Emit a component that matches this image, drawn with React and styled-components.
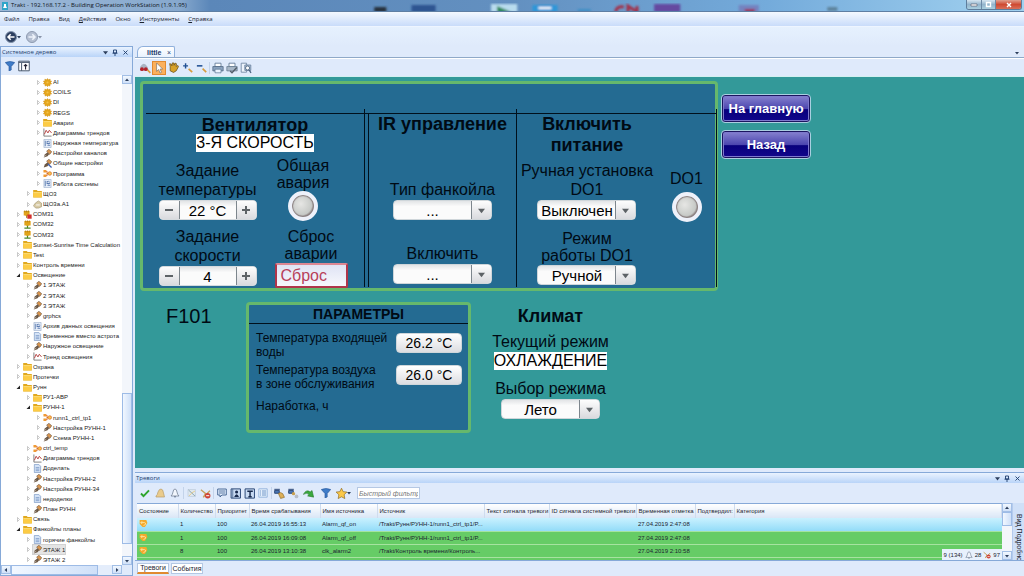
import React from "react";
import styled, { createGlobalStyle, css } from "styled-components";

const GlobalStyle = createGlobalStyle`
    * {
        box-sizing: border-box;
    }

    body {
        margin: 0;
        font-family: "Liberation Sans", Arial, sans-serif;
        font-size: 6px;
        color: #1b2430;
    }

    button, input, select {
        font-family: inherit;
        font-size: inherit;
        color: inherit;
        margin: 0;
        padding: 0;
    }

    ul {
        list-style: none;
        margin: 0;
        padding: 0;
    }
`

const Window = styled.div`
    display: flex;
    flex-direction: column;
    height: 100vh;
    overflow: hidden;
    background: #dfeafb;
`

/* ---------- window chrome ---------- */

const TitleBar = styled.header`
    display: flex;
    align-items: center;
    height: 12px;
    padding-left: 2px;
    background: linear-gradient(90deg, #9db9d8 0, #86a8cd 180px, #5b87b9 210px, #6390c0 50%, #74abdb 75%, #a2d2f0 100%);
    border-bottom: 1px solid #5f7fa3;
    overflow: hidden;
`

const WindowTitle = styled.h1`
    margin: 0 0 0 3px;
    font: 400 6px/11px "Open Sans", "Noto Sans", sans-serif;
    color: #10151c;
    white-space: nowrap;
`

const Backdrop = styled.svg`
    flex: 1;
    height: 12px;
    min-width: 0;
`

const WindowButtons = styled.div`
    display: flex;
    align-self: flex-start;
    margin-right: 2px;
    border: 1px solid #5e7d9c;
    border-top: 0;
    border-radius: 0 0 3px 3px;
    overflow: hidden;
`

const WindowButton = styled.button`
    display: flex;
    align-items: center;
    justify-content: center;
    width: ${props => props.$close ? "26px" : "14px"};
    height: 9px;
    border: 0;
    border-left: ${props => props.$first ? "0" : "1px solid #6d8aa6"};
    background: ${props => props.$close
        ? "linear-gradient(#e0a08f, #cf4a32 50%, #d8705a)"
        : "linear-gradient(#d6e6f2, #93b4cc 50%, #a9cfe0)"};
`

const MenuBar = styled.nav`
    display: flex;
    align-items: center;
    gap: 9px;
    height: 15px;
    padding-left: 4px;
    background: linear-gradient(#f4f9ff, #c9dcfa);
    border-bottom: 1px solid #eef5ff;
`

const MenuItem = styled.button`
    border: 0;
    background: none;
    font: 400 6px/12px "Open Sans", "Noto Sans", sans-serif;

    &::first-letter {
        text-decoration: ${props => props.$underline ? "underline" : "none"};
    }
`

const NavBar = styled.div`
    display: flex;
    align-items: center;
    height: 19px;
    padding-left: 4px;
    gap: 2px;
    background: linear-gradient(#e6f1fe, #dfeafb);
`

const IconButton = styled.button`
    display: flex;
    align-items: center;
    justify-content: center;
    flex: none;
    width: ${props => props.$width || 14}px;
    height: 14px;
    border: 1px solid ${props => props.$active ? "#e08a30" : "transparent"};
    background: ${props => props.$active ? "#fbb05c" : "none"};
`

const Body = styled.div`
    display: flex;
    flex: 1;
    min-height: 0;
    gap: 2px;
`

/* ---------- system tree ---------- */

const Sidebar = styled.aside`
    display: flex;
    flex-direction: column;
    width: 133px;
    flex: none;
    border: 1px solid #86a9d8;
    background: #dfeafb;
`

const PaneHeader = styled.div`
    display: flex;
    align-items: center;
    height: 10px;
    padding: 0 2px 0 1px;
    background: linear-gradient(#eaf3ff, #b9d4f8);
    color: #1d3c6c;
    flex: none;
`

const PaneTitle = styled.h2`
    flex: 1;
    margin: 0;
    font: 400 6px/10px "Open Sans", "Noto Sans", sans-serif;
`

const PaneButton = styled.button`
    display: flex;
    align-items: center;
    justify-content: center;
    width: 10px;
    height: 9px;
    border: 0;
    background: none;
`

const TreeToolbar = styled.div`
    display: flex;
    align-items: center;
    height: 18px;
    padding-left: 2px;
    flex: none;
`

const TreeArea = styled.div`
    display: grid;
    grid-template-columns: 1fr 10px;
    grid-template-rows: minmax(0, 1fr) 10px;
    flex: 1;
    min-height: 0;
`

const Tree = styled.ul`
    display: grid;
    grid-auto-rows: 1fr;
    padding-top: 2px;
    background: #fff;
    overflow: hidden;
`

const TreeItem = styled.li`
    display: flex;
    align-items: center;
    min-height: 0;
    gap: 1px;
    padding-left: ${props => 14 + props.$level * 10}px;
    white-space: nowrap;
`

const TreeLabel = styled.span`
    display: flex;
    align-items: center;
    gap: 1px;
    line-height: 8px;
    color: #222;
    background: ${props => props.$selected ? "#e4e4e4" : "none"};
    outline: ${props => props.$selected ? "1px solid #d2d2d2" : "none"};
`

const ScrollTrack = styled.div`
    display: flex;
    flex-direction: ${props => props.$horizontal ? "row" : "column"};
    min-height: 0;
    background: ${props => props.$horizontal ? "#e4edfb" : "#f3f6fb"};
`

const ScrollButton = styled.button`
    display: flex;
    align-items: center;
    justify-content: center;
    flex: none;
    width: 10px;
    height: 9px;
    border: 1px solid #a3bfe6;
    background: linear-gradient(#f2f8ff, #cfe0f8);
`

const ScrollGap = styled.div`
    flex: ${props => props.$size};
`

const ScrollThumb = styled.div`
    flex: ${props => props.$size};
    border: 1px solid #9dbbe6;
    background: linear-gradient(90deg, #f1f7ff, #cfe0f8);
`

/* ---------- graphics page ---------- */

const Main = styled.main`
    display: flex;
    flex-direction: column;
    flex: 1;
    min-width: 0;
`

const TabStrip = styled.div`
    display: flex;
    align-items: flex-end;
    justify-content: space-between;
    height: 12px;
    padding: 0 2px;
    border-bottom: 1px solid #8fa9c8;
`

const PageTab = styled.button`
    display: flex;
    align-items: center;
    justify-content: space-between;
    width: 38px;
    height: 11px;
    padding: 0 3px 0 9px;
    border: 1px solid #8fb0dc;
    border-bottom: 0;
    border-radius: 6px 2px 0 0;
    background: linear-gradient(#fff, #e9f2fe);
    font-size: 7px;
    font-weight: 700;
    color: #1d3c6c;

    span {
        font-weight: 400;
    }
`

const PageToolbar = styled.div`
    display: flex;
    align-items: center;
    height: 19px;
    padding-left: 3px;
    border-top: 1px solid #fff;
    border-bottom: 1px solid #d4f0f0;
    background: #dfeafb;
`

const Divider = styled.div`
    width: 1px;
    height: 12px;
    margin: 0 1px;
    background: #c3d3ea;
`

const Canvas = styled.section`
    flex: 1;
    min-height: 0;
    padding: 4px 0 0 5px;
    background: #339999;
    color: #000a14;
    font-size: 16px;
    overflow: hidden;
`

const UpperRow = styled.div`
    display: grid;
    grid-template-columns: 578fr 90fr 210fr;
    column-gap: 3px;
`

const LowerRow = styled.div`
    display: grid;
    grid-template-columns: 106px 225px 159px;
    align-items: start;
    margin-top: 11px;
`

const framed = css`
    border: 3px solid #66b86c;
    border-radius: 4px;
    background: #246b92;
`

const ControlPanel = styled.div`
    ${framed}
    height: 210px;
    padding-top: 29px;
`

const Sections = styled.div`
    display: grid;
    grid-template-columns: 1fr 1px 3px 1px 147px 1px 199px 1px;
    height: 100%;
    margin: 0 -2px 0 3px;
    border-top: 1px solid #00101c;
`

const Rule = styled.div`
    background: #00101c;
    margin-top: ${props => props.$raised ? "-5px" : "0"};
    margin-bottom: 1px;
`

const Section = styled.section`
    display: flex;
    flex-direction: column;
    align-items: center;
    min-width: 0;
`

const SectionTitle = styled.h2`
    margin: 0;
    padding-top: ${props => props.$low ? "2px" : "0"};
    font-size: 18px;
    line-height: ${props => props.$low ? "18px" : "21px"};
    font-weight: 700;
    text-align: center;
    white-space: nowrap;
`

const Status = styled.output`
    display: block;
    background: #fff;
    line-height: 18px;
    color: #000;
    white-space: nowrap;
`

const FanColumns = styled.div`
    display: flex;
    gap: 18px;
    margin-top: 5px;
    padding-right: 4px;
`

const Stack = styled.div`
    display: flex;
    flex-direction: column;
    align-items: center;
    gap: ${props => props.$gap || 0}px;
    padding-top: ${props => props.$top || 0}px;
    min-width: 0;
`

const Field = styled.div`
    display: flex;
    flex-direction: column;
    align-items: center;
    gap: 1px;
`

const Caption = styled.label`
    display: block;
    line-height: ${props => props.$tight ? 17 : 19}px;
    text-align: center;
    white-space: pre;
`

const StepperFrame = styled.div`
    display: flex;
    width: 98px;
    height: 20px;
    border-radius: 4px;
    border: 1px solid #d5dade;
    background: #f4f4f5;
    overflow: hidden;

    input {
        flex: 1;
        min-width: 0;
        border: 0;
        background: linear-gradient(#e2e4e6, #fbfbfb 30%);
        font-size: 15px;
        text-align: center;
        color: #000;
    }
`

const StepButton = styled.button`
    display: flex;
    align-items: center;
    justify-content: center;
    width: 20px;
    border: 0;
    ${props => props.$plus ? "border-left" : "border-right"}: 1px solid #7d868d;
    background: linear-gradient(#fdfdfd, #d9dade);
`

const ComboFrame = styled.div`
    display: grid;
    width: 99px;
    height: 20px;
    border: 1px solid #cfd6da;
    border-radius: 4px;
    background: linear-gradient(#e2e4e6, #fbfbfb 30%);
    overflow: hidden;
`

const ComboSelect = styled.select`
    grid-area: 1 / 1;
    width: 100%;
    min-width: 0;
    height: 18px;
    padding-right: 20px;
    border: 0;
    appearance: none;
    background: none;
    font-size: 15px;
    text-align: center;
    text-align-last: center;
    color: #000;
`

const ComboArrow = styled.span`
    grid-area: 1 / 1;
    justify-self: end;
    display: flex;
    align-items: center;
    justify-content: center;
    width: 20px;
    border-left: 1px solid #7d868d;
    background: linear-gradient(#fdfdfd, #d9dade);
    pointer-events: none;
`

const Lamp = styled.div`
    width: 30px;
    height: 30px;
    border: 4px solid #eef1fa;
    border-radius: 50%;
    background: radial-gradient(circle at 40% 40%, #e6e6e4, #c6c9c6 60%, #8d8482 72%);
    box-shadow: inset 0 0 1px 1px #8a7f80;
`

const AlarmField = styled(Field)`
    gap: 0;
    padding-right: 16px;
`

const ResetButton = styled.button`
    width: 73px;
    height: 25px;
    padding-left: 4px;
    border: 2px solid #b0354a;
    border-top-color: #dc8793;
    border-radius: 2px;
    background: linear-gradient(#dfe3f4, #f7f8fd);
    text-align: left;
    color: #b8405a;
`

const PowerColumns = styled.div`
    display: grid;
    grid-template-columns: 140px 59px;
`

const PageLinks = styled.nav`
    display: flex;
    flex-direction: column;
    gap: 7px;
    padding-top: 13px;
`

const PageLink = styled.a`
    height: 29px;
    border: 1px solid #a9cfe0;
    border-radius: 4px;
    box-shadow: inset 0 0 0 1px #1b1560, inset 0 0 0 2px #7d78cc;
    background: linear-gradient(#8a86d2, #4a44ae 52%, #08007c 54%, #12088c);
    font-size: 13px;
    line-height: 27px;
    font-weight: 700;
    text-align: center;
    text-decoration: none;
    white-space: nowrap;
    color: #fff;
`

const RoomName = styled.h2`
    margin: 0;
    padding: 3px 0 0 26px;
    font-size: 20px;
    line-height: 22px;
    font-weight: 400;
`

const ParamsPanel = styled.section`
    ${framed}
    height: 131px;
`

const ParamsTitle = styled.h3`
    margin: 0;
    height: 19px;
    border-bottom: 1px solid #00101c;
    font-size: 14px;
    line-height: 19px;
    text-align: center;
`

const ParamRow = styled.div`
    display: flex;
    align-items: flex-start;
    justify-content: space-between;
    height: 32px;
    padding: 0 6px 0 7px;
    margin-top: ${props => props.$top || 0}px;
    font-size: 12px;
    line-height: 14px;
    white-space: pre;

    input {
        width: 66px;
        height: 20px;
        margin-top: 2px;
        border: 1px solid #cfd6da;
        border-radius: 4px;
        background: linear-gradient(#fff, #dcdde1);
        font-size: 14px;
        text-align: center;
        color: #000;
    }
`

const Climate = styled.section`
    display: flex;
    flex-direction: column;
    align-items: center;
    gap: 1px;
    padding-top: 4px;
`

const ClimateCaption = styled(Caption)`
    padding-top: ${props => props.$top}px;
`

/* ---------- alarm pane ---------- */

const AlarmPane = styled.section`
    display: flex;
    flex-direction: column;
    height: 104px;
    margin-top: 4px;
    flex: none;
    border-top: 1px solid #86a9d8;
`

const AlarmToolbar = styled.div`
    display: flex;
    align-items: center;
    height: 20px;
    padding-left: 2px;
    flex: none;
`

const FilterInput = styled.input`
    width: 63px;
    height: 12px;
    margin-left: 5px;
    padding: 0 1px;
    border: 1px solid #b5c8e4;
    background: #fff;
    font-size: 7px;
    font-style: italic;

    &::placeholder {
        color: #777;
    }
`

const AlarmBody = styled.div`
    display: grid;
    grid-template-columns: minmax(0, 1fr) 10px 12px;
    height: 58px;
    padding-left: 2px;
    border-bottom: 1px solid #86a9d8;
    flex: none;
`

const TableClip = styled.div`
    position: relative;
    overflow: hidden;
    border-top: 1px solid #86a9d8;
    background: #66cc66;
`

const AlarmTable = styled.table`
    width: 100%;
    table-layout: fixed;
    border-collapse: collapse;

    th {
        height: 14px;
        padding: 0 0 0 2px;
        border-right: 1px solid #cfdcee;
        background: linear-gradient(#fff, #d9e6f6);
        font-weight: 400;
        text-align: left;
        white-space: nowrap;
        overflow: hidden;
    }

    td {
        height: 13px;
        padding: 0 0 0 2px;
        border-bottom: 1px solid #a6e3a0;
        white-space: nowrap;
        overflow: hidden;
        text-overflow: ellipsis;
    }
`

const AlarmRow = styled.tr`
    background: ${props => props.$selected ? "linear-gradient(#c9f1ff, #93dcf8)" : "#66cc66"};
`

const Counters = styled.div`
    position: absolute;
    right: 0;
    bottom: 0;
    display: flex;
    align-items: center;
    gap: 2px;
    height: 11px;
    padding: 0 2px;
    background: #e8f1fc;
    white-space: nowrap;
`

const DetailsTab = styled.button`
    display: flex;
    flex-direction: column;
    align-items: center;
    gap: 6px;
    padding-top: 5px;
    border: 0;
    border-left: 1px solid #b4cbed;
    background: #cfe0f8;
    overflow: hidden;

    span {
        writing-mode: vertical-rl;
        font: 400 7px/8px "Liberation Sans", sans-serif;
        white-space: nowrap;
    }
`

const BottomTabs = styled.div`
    display: flex;
    gap: 2px;
    flex: 1;
    padding: 2px 0 2px 2px;
    border-bottom: 1px solid #6f8fb6;
`

const BottomTab = styled.button`
    width: 32px;
    height: 11px;
    border: 1px solid #b4c8e4;
    border-bottom: ${props => props.$active ? "2px solid #e08a30" : "1px solid #b4c8e4"};
    background: #fff;
    font-size: 7px;
    line-height: 8px;
    white-space: nowrap;
`

/* ---------- icons ---------- */

const glyphs = {
    flower: <>
        <path d="M5 .5 6 2 8 1.200 8 3 9.700 3.500 8.500 5 9.700 6.700 7.800 7 7.800 9 6 8.300 5 9.700 4 8.300 2.200 9 2.200 7 .3 6.500 1.500 5 .3 3.500 2.200 3 2 1.200 4 2z" fill="#e5a61c" stroke="#c58613" strokeWidth=".4" />
        <circle cx="5" cy="5" r="1.200" fill="#f2c048" />
    </>,
    folder: <>
        <path d="M.2 1h4l1 1.200h4.600v7.300H.2z" fill="#e0a81e" />
        <path d="M.2 3.600h9.600v5.600H.2z" fill="#fccb45" />
        <path d="M.5 4h9" stroke="#ffe99a" strokeWidth=".7" />
    </>,
    chart: <>
        <path d="M1 .5v8.500h8.500" fill="none" stroke="#555" strokeWidth=".8" />
        <path d="m1.500 7 2-4.500 2 3 1.500-3 2.500 3" fill="none" stroke="#b23a3a" strokeWidth="1" />
    </>,
    log: <>
        <path d="M1 .5h8v9h-8z" fill="#e4ecf8" stroke="#8ea3c4" strokeWidth=".6" />
        <path d="M2.500 2v6M4 3h2M4 5h3.500M5 7h3" stroke="#4d6ea8" strokeWidth=".9" />
        <circle cx="6" cy="4" r="1.500" fill="none" stroke="#4d6ea8" strokeWidth=".6" />
    </>,
    doc: <>
        <path d="M1.500.5h5l2 2v7h-7z" fill="#d5e3f6" stroke="#6f8fc0" strokeWidth=".7" />
        <path d="M3 4h4M3 5.700h4M3 7.400h4" stroke="#6f8fc0" strokeWidth=".8" />
    </>,
    pen: <>
        <path d="M.8 9.500 2 6l3-2.500L7 5.500 5 8z" fill="#6a5541" />
        <path d="M4 2.500 6.500.3l3.200 2.700-2.200 3z" fill="#d9964f" stroke="#5a4738" strokeWidth=".6" />
        <path d="m1.200 9 2.600-2.600" stroke="#eee" strokeWidth=".6" />
    </>,
    penBlue: <>
        <path d="M.8 9.500 2 6l3-2.500L7 5.500 5 8z" fill="#6a5541" />
        <path d="M4 2.500 6.500.3l3.200 2.700-2.200 3z" fill="#d9964f" stroke="#5a4738" strokeWidth=".6" />
        <path d="m5.500 5.500 4 4" stroke="#3c5fb0" strokeWidth="1.400" />
    </>,
    program: <>
        <path d="M2 2.500h2.500v5H2M4.500 5h2" fill="none" stroke="#d4631a" strokeWidth="1" />
        <path d="M.5 1h3v3h-3zM.5 6h3v3h-3z" fill="#f09a33" />
        <circle cx="7.500" cy="5" r="2" fill="#f8c14b" stroke="#d4631a" strokeWidth=".7" />
    </>,
    device: <>
        <path d="M2.500 3.500 6 1l3.500 2.500v4L6 9H3L.5 6.500z" fill="#d8cba6" stroke="#93845b" strokeWidth=".6" />
        <path d="M3.500 5.500h4" stroke="#fff" />
    </>,
    port: <>
        <path d="M1.500 1h7v5H6.500L5 7.500 3.500 6h-2z" fill="#e2a41a" />
        <path d="M3 .5v2M5 .5v2M7 .5v2" stroke="#b37a10" strokeWidth=".9" />
        <path d="M5 6.500V9M1.500 9h7" stroke="#4f8a2a" strokeWidth="1.300" />
    </>,
    portError: <>
        <path d="M.8 1h6.500v5H5.500L4 7.500 2.500 6H.8z" fill="#e2a41a" />
        <path d="M2 .5v2M4 .5v2M6 .5v2M4 6v3" stroke="#a77a16" strokeWidth="1" />
        <path d="M4.800 5h4.800v4.700H4.800z" fill="#d3302c" />
    </>,
    funnel: <path d="M.3 1.500q4.700-2 9.400 0L6.200 5.500v3.500l-2.200 1V5.500z" fill="#3f7cc8" stroke="#1f4f93" strokeWidth=".6" />,
    panel: <>
        <path d="M.6 1h8.800v8H.6z" fill="#fff" stroke="#44546a" strokeWidth=".8" />
        <path d="M.6 2h8.800M3 2.500V9" stroke="#44546a" strokeWidth=".8" />
        <path d="M6.300 8V4M5 5.200l1.300-1.400 1.300 1.400" fill="none" stroke="#223" strokeWidth=".9" />
    </>,
    goggles: <>
        <path d="M1 4q3-5 6 0l1 3H1z" fill="#a9b4c4" />
        <circle cx="2.500" cy="6" r="1.600" fill="#b3222c" /><circle cx="5.700" cy="6" r="1.600" fill="#b3222c" />
        <path d="m7 6.500 2.500 2.500" stroke="#d89d3e" strokeWidth="1.400" />
    </>,
    cursor: <path d="M3 .8v7l1.700-1.500 1.200 2.900 1.200-.6-1.200-2.700h2.200z" fill="#fff" stroke="#80776a" strokeWidth=".6" />,
    hand: <path d="M2 4 1.500 1.500 3 2 3.500 3.500 4 .8l1.500.2v2L6.500 1l1.200.6-.4 2.400 1.700-.8.5 1L7.500 8 5 9.500 2 8z" fill="#d7a22a" stroke="#6b5017" strokeWidth=".7" />,
    zoomIn: <>
        <path d="M1 3.500h4.500M3.250 1.200v4.600" stroke="#1f4f93" strokeWidth="1.300" />
        <path d="m6 6.300 3.300 3" stroke="#d89d3e" strokeWidth="1.500" />
    </>,
    zoomOut: <>
        <path d="M.8 3.500h5" stroke="#1f4f93" strokeWidth="1.400" />
        <path d="m6 6 3.300 3.200" stroke="#d89d3e" strokeWidth="1.500" />
    </>,
    print: <>
        <path d="M2.500 1h5v3h-5z" fill="#fff" stroke="#5b7593" strokeWidth=".7" />
        <path d="M.7 3.800h8.600v3.600H.7z" fill="#8ca4c0" stroke="#48607c" strokeWidth=".6" />
        <path d="M2.500 6h5v3h-5z" fill="#eaf3ff" stroke="#5b7593" strokeWidth=".6" />
    </>,
    printSetup: <>
        <path d="M2.500 1h5v3h-5z" fill="#fff" stroke="#5b7593" strokeWidth=".7" />
        <path d="M.7 3.800h8.600v3.600H.7z" fill="#a9b8c8" stroke="#5f7388" strokeWidth=".6" />
        <path d="m3.500 7.500 1.500 1.500 4-4.500" fill="none" stroke="#555f6c" strokeWidth="1.200" />
    </>,
    preview: <>
        <path d="M1 1h4.500v7.500H1z" fill="#edf3fb" stroke="#6d83a0" strokeWidth=".7" />
        <path d="M4 2.500h5V7H4z" fill="#b3c4da" stroke="#6d83a0" strokeWidth=".7" />
        <circle cx="6.300" cy="5" r="1.700" fill="#fff" stroke="#48607c" strokeWidth=".7" />
        <path d="m7.500 6.500 1.700 2.500" stroke="#48607c" strokeWidth="1" />
    </>,
    check: <path d="m1 5.500 2.500 2.700L9 2.300" fill="none" stroke="#2fa52c" strokeWidth="1.900" />,
    bellGold: <path d="M1 8q1.500-1 2-4Q4 1 6 1t2.500 4l1 4H1z" fill="#eacb8c" stroke="#b79c68" strokeWidth=".7" />,
    bell: <>
        <path d="M1 8q1.700-1.500 2-4Q3.400 1 5 1t2 3q.3 2.500 2 4z" fill="#f2f6fc" stroke="#65748a" strokeWidth=".7" />
        <path d="M4 8.800h2" stroke="#65748a" />
    </>,
    bellOff: <>
        <path d="M1 1.500h7.500v7H1z" fill="#dfe8ef" stroke="#b8c8d8" strokeWidth=".6" />
        <path d="m1.500 2 6.500 6" stroke="#8faab8" />
        <path d="M2 8q3-4 6-5" stroke="#e5cf96" fill="none" />
    </>,
    bellStop: <>
        <path d="M.8 1.500 5 5 3 8.500l6-6" fill="none" stroke="#c8a15c" strokeWidth="1.200" />
        <circle cx="7" cy="7" r="2.500" fill="#cf4236" /><path d="M5.600 7h2.800" stroke="#fff" strokeWidth=".9" />
    </>,
    comment: <>
        <path d="M.7 1h8.600v6H5L3 9V7H.7z" fill="#dce9fa" stroke="#40618f" strokeWidth=".9" />
        <path d="M2 3h6M2 5h6" stroke="#40618f" strokeWidth=".8" />
    </>,
    person: <>
        <path d="M1 .8h8.500v8.400H1z" fill="#c9dbf3" stroke="#2d4977" strokeWidth=".9" />
        <path d="M2.500 1v8" stroke="#2d4977" strokeWidth=".6" />
        <circle cx="6" cy="3.600" r="1.400" fill="#17294c" /><path d="M3.800 8.200Q6 3 8.200 8.200z" fill="#17294c" />
    </>,
    cause: <>
        <path d="M1 .8h8.500v8.400H1z" fill="#c9dbf3" stroke="#2d4977" strokeWidth=".9" />
        <path d="M3 3h5M5.500 3v5M4 8h3" stroke="#17294c" strokeWidth="1.300" />
    </>,
    list: <>
        <path d="M.8.8h8.400v8.400H.8z" fill="#e4effc" stroke="#86a9d8" strokeWidth=".8" />
        <path d="M2 3h1M4 3h4M2 5h1M4 5h4M2 7h1M4 7h4" stroke="#6790c4" strokeWidth=".9" />
    </>,
    watch: <>
        <path d="M.3 1.200h5M.6 2.200h4.200v2.600H.6z" fill="#4976b5" stroke="#2d4977" strokeWidth=".9" />
        <path d="m4 5 2-.8 2 1 1.500 3.300-3.500 1z" fill="#ddb058" stroke="#8d6b2b" strokeWidth=".6" />
    </>,
    watchOff: <>
        <path d="M.3 1.200h5M.6 2.200h4.200v2.600H.6z" fill="#4976b5" stroke="#2d4977" strokeWidth=".9" />
        <circle cx="5" cy="5.200" r="1.500" fill="#c9a04e" /><circle cx="7.700" cy="7.700" r="1.700" fill="#b8bec8" />
    </>,
    jump: <path d="M.3 5.800Q3 .8 6.500 3.600L8.200 2.300 9.700 8.300 4.200 7.200l1.300-1.300Q3.500 3.800.3 5.800z" fill="#3aa83d" stroke="#237327" strokeWidth=".5" />,
    star: <path d="m5 .2 1.500 3.100 3.400.4-2.500 2.400.6 3.500L5 8 2 9.600l.6-3.500L.1 3.700l3.400-.4z" fill="#fbc94a" stroke="#8b671b" strokeWidth=".6" />,
    returned: <>
        <path d="M.7 1.200h7.500l1.100 3.300L6.500 9H4L.7 5.500z" fill="#f5a92c" />
        <path d="M3.500 2.500 2 4l1.500 1.500M2.200 4h4q1.500.2 1 2L5 7.300" fill="none" stroke="#ffedb0" strokeWidth=".9" />
    </>,
}

const Icon = ({ name, size = 10 }) => (
    <svg width={size} height={size} viewBox="0 0 10 10" aria-hidden="true">
        {glyphs[name]}
    </svg>
)

const arrows = { down: "M0 1h4L2 3.500z", up: "M0 3h4L2 .5z", left: "M3 0v4L.5 2z", right: "M1 0v4l2.500-2z" }

const Arrow = ({ to = "down", size = 4, color = "#2c3e5c" }) => (
    <svg width={size} height={size} viewBox="0 0 4 4" aria-hidden="true">
        <path d={arrows[to]} fill={color} />
    </svg>
)

const Expander = ({ open }) => (
    <svg width="7" height="7" viewBox="0 0 7 7" aria-hidden="true">
        {open
            ? <path d="M5 1.500V5H1.500z" fill="#222" />
            : <path d="M2.500 1.500v4l2-2z" fill="#fff" stroke="#a5a5a5" strokeWidth=".6" />}
    </svg>
)

const PaneControls = () => (
    <>
        <PaneButton aria-label="Меню"><Arrow size={5} /></PaneButton>
        <PaneButton aria-label="Закрепить">
            <svg width="6" height="7" viewBox="0 0 6 7"><path d="M1.500 1h3v3h-3zM.5 4.200h5M3 4.200V7" fill="none" stroke="#1d3c6c" strokeWidth=".9" /></svg>
        </PaneButton>
        <PaneButton aria-label="Закрыть">
            <svg width="5" height="5" viewBox="0 0 5 5"><path d="m.5.5 4 4m0-4-4 4" stroke="#1d3c6c" strokeWidth=".9" /></svg>
        </PaneButton>
    </>
)

/* ---------- data ---------- */

// [level, icon, label, open]
const tree = [
    [2, "flower", "AI"],
    [2, "flower", "COILS"],
    [2, "flower", "DI"],
    [2, "flower", "REGS"],
    [2, "folder", "Аварии"],
    [2, "chart", "Диаграммы трендов"],
    [2, "log", "Наружная температура"],
    [2, "pen", "Настройки каналов"],
    [2, "penBlue", "Общие настройки"],
    [2, "program", "Программа"],
    [2, "log", "Работа системы"],
    [1, "folder", "ЩО3"],
    [1, "device", "ЩО3а.А1"],
    [0, "portError", "COM31"],
    [0, "port", "COM32"],
    [0, "port", "COM33"],
    [0, "folder", "Sunset-Sunrise Time Calculation"],
    [0, "folder", "Test"],
    [0, "folder", "Контроль времени"],
    [0, "folder", "Освещение", true],
    [1, "pen", "1 ЭТАЖ"],
    [1, "pen", "2 ЭТАЖ"],
    [1, "pen", "3 ЭТАЖ"],
    [1, "pen", "grphcs"],
    [1, "log", "Архив данных освещения"],
    [1, "doc", "Временное вместо астрота"],
    [1, "pen", "Наружное освещение"],
    [1, "chart", "Тренд  освещения"],
    [0, "folder", "Охрана"],
    [0, "folder", "Протечки"],
    [0, "folder", "Рунн", true],
    [1, "folder", "РУ1-АВР"],
    [1, "folder", "РУНН-1", true],
    [2, "program", "runn1_ctrl_tp1"],
    [2, "pen", "Настройка РУНН-1"],
    [2, "pen", "Схема РУНН-1"],
    [1, "program", "ctrl_temp"],
    [1, "chart", "Диаграммы трендов"],
    [1, "doc", "Доделать"],
    [1, "pen", "Настройка РУНН-2"],
    [1, "pen", "Настройка РУНН-34"],
    [1, "doc", "недоделки"],
    [1, "pen", "План РУНН"],
    [0, "folder", "Связь"],
    [0, "folder", "Фанкойлы планы", true],
    [1, "doc", "горячие фанкойлы"],
    [1, "pen", "ЭТАЖ 1"],
    [1, "pen", "ЭТАЖ 2"],
]

const menu = ["Файл", "Правка", "Вид", "Действия", "Окно", "Инструменты", "Справка"]

const columns = [
    ["Состояние", 41],
    ["Количество", 37],
    ["Приоритет", 34],
    ["Время срабатывания", 71],
    ["Имя источника", 57],
    ["Источник", 107],
    ["Текст сигнала тревоги", 65],
    ["ID сигнала системной тревоги", 87],
    ["Временная отметка", 59],
    ["Подтвердил:", 39],
    ["Категория"],
]

// the last row is scrolled halfway out of view
const alarms = [
    ["1", "100", "26.04.2019 16:55:13", "Alarm_qf_on", "/Trakt/Рунн/РУНН-1/runn1_ctrl_tp1/P...", "27.04.2019 2:47:08"],
    ["1", "100", "26.04.2019 16:09:08", "Alarm_qf_off", "/Trakt/Рунн/РУНН-1/runn1_ctrl_tp1/P...", "27.04.2019 2:47:08"],
    ["8", "100", "26.04.2019 13:10:38", "clk_alarm2", "/Trakt/Контроль времени/Контроль...", "27.04.2019 2:10:58"],
    [],
]

/* ---------- parts ---------- */

const Stepper = ({ id, value }) => (
    <StepperFrame>
        <StepButton aria-label="Меньше">
            <svg width="10" height="10" viewBox="0 0 10 10"><path d="M1 5h8" stroke="#5d6266" strokeWidth="2" /></svg>
        </StepButton>
        <input id={id} defaultValue={value} />
        <StepButton $plus aria-label="Больше">
            <svg width="10" height="10" viewBox="0 0 10 10"><path d="M1 5h8M5 1v8" stroke="#5d6266" strokeWidth="2" /></svg>
        </StepButton>
    </StepperFrame>
)

const Combo = ({ id, value }) => (
    <ComboFrame>
        <ComboSelect id={id} defaultValue={value}>
            <option>{value}</option>
        </ComboSelect>
        <ComboArrow><Arrow size={7} color="#5d6266" /></ComboArrow>
    </ComboFrame>
)

function SystemTree() {
    return (
        <Sidebar>
            <PaneHeader>
                <PaneTitle>Системное дерево</PaneTitle>
                <PaneControls />
            </PaneHeader>
            <TreeToolbar>
                <IconButton aria-label="Фильтр"><Icon name="funnel" /></IconButton>
                <IconButton aria-label="Панель"><Icon name="panel" size={12} /></IconButton>
            </TreeToolbar>
            <TreeArea>
                <Tree>
                    {tree.map(([level, icon, label, open], i) => (
                        <TreeItem key={i} $level={level}>
                            <Expander open={open} />
                            <TreeLabel $selected={label === "ЭТАЖ 1"}>
                                <Icon name={icon} size={9} />{label}
                            </TreeLabel>
                        </TreeItem>
                    ))}
                </Tree>
                <ScrollTrack>
                    <ScrollButton aria-label="Вверх"><Arrow to="up" /></ScrollButton>
                    <ScrollGap $size={310} />
                    <ScrollThumb $size={150} />
                    <ScrollGap $size={12} />
                    <ScrollButton aria-label="Вниз"><Arrow /></ScrollButton>
                </ScrollTrack>
                <ScrollTrack $horizontal>
                    <ScrollButton aria-label="Влево"><Arrow to="left" /></ScrollButton>
                    <ScrollThumb $size={87} />
                    <ScrollGap $size={14} />
                    <ScrollButton aria-label="Вправо"><Arrow to="right" /></ScrollButton>
                </ScrollTrack>
            </TreeArea>
        </Sidebar>
    )
}

function FanSection() {
    return (
        <Section>
            <SectionTitle $low>Вентилятор</SectionTitle>
            <Status>3-Я СКОРОСТЬ</Status>
            <FanColumns>
                <Stack $gap={7} $top={4}>
                    <Field>
                        <Caption htmlFor="temp">{"Задание\nтемпературы"}</Caption>
                        <Stepper id="temp" value="22 °C" />
                    </Field>
                    <Field>
                        <Caption htmlFor="speed">{"Задание\nскорости"}</Caption>
                        <Stepper id="speed" value="4" />
                    </Field>
                </Stack>
                <Stack $gap={7}>
                    <AlarmField>
                        <Caption as="span" $tight>{"Общая\nавария"}</Caption>
                        <Lamp />
                    </AlarmField>
                    <Field>
                        <Caption htmlFor="reset" $tight>{"Сброс\nаварии"}</Caption>
                        <ResetButton id="reset">Сброс</ResetButton>
                    </Field>
                </Stack>
            </FanColumns>
        </Section>
    )
}

function RemoteSection() {
    return (
        <Section>
            <SectionTitle>IR управление</SectionTitle>
            <Stack $gap={24} $top={45}>
                <Field>
                    <Caption htmlFor="type">Тип фанкойла</Caption>
                    <Combo id="type" value="..." />
                </Field>
                <Field>
                    <Caption htmlFor="enable">Включить</Caption>
                    <Combo id="enable" value="..." />
                </Field>
            </Stack>
        </Section>
    )
}

function PowerSection() {
    return (
        <PowerColumns>
            <Stack>
                <SectionTitle>Включить<br />питание</SectionTitle>
                <Stack $gap={10} $top={5}>
                    <Field>
                        <Caption htmlFor="manual">{"Ручная установка\nDO1"}</Caption>
                        <Combo id="manual" value="Выключен" />
                    </Field>
                    <Field>
                        <Caption htmlFor="mode" $tight>{"Режим\nработы DO1"}</Caption>
                        <Combo id="mode" value="Ручной" />
                    </Field>
                </Stack>
            </Stack>
            <Stack $gap={4} $top={55}>
                <Caption as="span">DO1</Caption>
                <Lamp />
            </Stack>
        </PowerColumns>
    )
}

function Graphics() {
    return (
        <Canvas>
            <UpperRow>
                <ControlPanel>
                    <Sections>
                        <FanSection />
                        <Rule $raised />
                        <span />
                        <Rule />
                        <RemoteSection />
                        <Rule $raised />
                        <PowerSection />
                        <Rule $raised />
                    </Sections>
                </ControlPanel>
                <PageLinks>
                    <PageLink href="#main">На главную</PageLink>
                    <PageLink href="#back">Назад</PageLink>
                </PageLinks>
            </UpperRow>
            <LowerRow>
                <RoomName>F101</RoomName>
                <ParamsPanel>
                    <ParamsTitle>ПАРАМЕТРЫ</ParamsTitle>
                    <ParamRow $top={7}>
                        <label htmlFor="water">{"Температура входящей\nводы"}</label>
                        <input id="water" readOnly value="26.2 °C" />
                    </ParamRow>
                    <ParamRow>
                        <label htmlFor="air">{"Температура воздуха\nв зоне обслуживания"}</label>
                        <input id="air" readOnly value="26.0 °C" />
                    </ParamRow>
                    <ParamRow $top={4}>
                        <span>Наработка, ч</span>
                    </ParamRow>
                </ParamsPanel>
                <Climate>
                    <SectionTitle>Климат</SectionTitle>
                    <ClimateCaption as="span" $top={4}>Текущий режим</ClimateCaption>
                    <Status>ОХЛАЖДЕНИЕ</Status>
                    <ClimateCaption htmlFor="season" $top={8}>Выбор режима</ClimateCaption>
                    <Combo id="season" value="Лето" />
                </Climate>
            </LowerRow>
        </Canvas>
    )
}

function Alarms() {
    return (
        <AlarmPane>
            <PaneHeader>
                <PaneTitle>Тревоги</PaneTitle>
                <PaneControls />
            </PaneHeader>
            <AlarmToolbar>
                <IconButton $width={15} aria-label="Подтвердить"><Icon name="check" /></IconButton>
                <IconButton $width={16} aria-label="Тревога"><Icon name="bellGold" /></IconButton>
                <IconButton aria-label="Сигнал"><Icon name="bell" /></IconButton>
                <Divider />
                <IconButton $width={13} aria-label="Скрыть"><Icon name="bellOff" /></IconButton>
                <IconButton aria-label="Отключить"><Icon name="bellStop" size={11} /></IconButton>
                <Divider />
                <IconButton $width={13} aria-label="Комментарий"><Icon name="comment" /></IconButton>
                <IconButton aria-label="Назначить"><Icon name="person" size={11} /></IconButton>
                <IconButton aria-label="Причина"><Icon name="cause" size={11} /></IconButton>
                <IconButton aria-label="Список"><Icon name="list" /></IconButton>
                <Divider />
                <IconButton $width={13} aria-label="Наблюдать"><Icon name="watch" size={11} /></IconButton>
                <IconButton aria-label="Не наблюдать"><Icon name="watchOff" size={11} /></IconButton>
                <IconButton $width={17} aria-label="Перейти"><Icon name="jump" size={11} /></IconButton>
                <IconButton $width={17} aria-label="Фильтр"><Icon name="funnel" /></IconButton>
                <IconButton $width={18} aria-label="Избранное"><Icon name="star" size={11} /><Arrow /></IconButton>
                <FilterInput aria-label="Быстрый фильтр" placeholder="Быстрый фильтр" />
            </AlarmToolbar>
            <AlarmBody>
                <TableClip>
                    <AlarmTable>
                        <colgroup>
                            {columns.map(([name, width]) => <col key={name} width={width} />)}
                        </colgroup>
                        <thead>
                            <tr>{columns.map(([name]) => <th key={name}>{name}</th>)}</tr>
                        </thead>
                        <tbody>
                            {alarms.map(([count, priority, time, name, source, stamp], i) => (
                                <AlarmRow key={i} $selected={i === 0}>
                                    <td><Icon name="returned" size={9} /></td>
                                    <td>{count}</td>
                                    <td>{priority}</td>
                                    <td>{time}</td>
                                    <td>{name}</td>
                                    <td>{source}</td>
                                    <td />
                                    <td />
                                    <td>{stamp}</td>
                                    <td />
                                    <td />
                                </AlarmRow>
                            ))}
                        </tbody>
                    </AlarmTable>
                    <Counters>
                        9 (134) <Icon name="bell" size={8} /> 28 <Icon name="bellStop" size={8} /> 97
                    </Counters>
                </TableClip>
                <ScrollTrack>
                    <ScrollButton aria-label="Вверх"><Arrow to="up" /></ScrollButton>
                    <ScrollThumb $size={13} />
                    <ScrollGap $size={27} />
                    <ScrollButton aria-label="Вниз"><Arrow /></ScrollButton>
                </ScrollTrack>
                <DetailsTab>
                    <Arrow to="left" size={5} />
                    <span>Вид Подробно</span>
                </DetailsTab>
            </AlarmBody>
            <BottomTabs>
                <BottomTab $active>Тревоги</BottomTab>
                <BottomTab>События</BottomTab>
            </BottomTabs>
        </AlarmPane>
    )
}

export default function App() {
    return (
        <Window>
            <GlobalStyle />
            <TitleBar>
                <svg width="6" height="8" viewBox="0 0 6 8" aria-hidden="true">
                    <path d="M0 0h6v8H0z" fill="#2fa5c9" />
                    <path d="M1 6h4L4 4V2H2v2z" fill="#fff" />
                </svg>
                <WindowTitle>Trakt - 192.168.17.2 - Building Operation WorkStation (1.9.1.95)</WindowTitle>
                <Backdrop viewBox="192 0 774 12" preserveAspectRatio="none" aria-hidden="true">
                    <filter id="soft"><feGaussianBlur stdDeviation="1.2" /></filter>
                    <g filter="url(#soft)">
                        <path d="M378 7h12v5h-12z" fill="#26303c" />
                        <path d="M415 5h24v7h-24z" fill="#2d5591" />
                        <path d="M494 4h26v8h-26z" fill="#b9dcee" />
                        <path d="m500 6 14 6h-14z" fill="#2d8a5c" />
                        <path d="M535 5h25v7h-25z" fill="#2f96d8" />
                        <path d="M541 8h13" stroke="#fff" strokeWidth="2" />
                        <path d="M580 9h13v3h-13z" fill="#3f8fc5" />
                        <path d="M618 12q0-6 8-5M630 12V6l9 6V6" fill="none" stroke="#a33049" strokeWidth="3" />
                        <path d="M656 4h26v8h-26z" fill="#6548a0" />
                        <path d="M740 5h20v7h-20z" fill="#7583c0" />
                        <path d="M746 9h10v3h-10z" fill="#9b2f4f" />
                        <path d="M828 7h10v4h-10z" fill="#5d839c" />
                    </g>
                </Backdrop>
                <WindowButtons>
                    <WindowButton $first aria-label="Свернуть"><svg width="8" height="4"><path d="M1 1h6v2H1z" fill="#fff" stroke="#556" strokeWidth=".6" /></svg></WindowButton>
                    <WindowButton aria-label="Развернуть"><svg width="7" height="7"><path d="M1.500 1.500h4v4h-4z" fill="none" stroke="#fff" strokeWidth="1.400" /></svg></WindowButton>
                    <WindowButton $close aria-label="Закрыть"><svg width="6" height="6"><path d="m1 1 4 4m0-4-4 4" stroke="#fff" strokeWidth="1.400" /></svg></WindowButton>
                </WindowButtons>
            </TitleBar>
            <MenuBar>
                {menu.map((item, i) => <MenuItem key={item} $underline={i > 2 && i !== 4}>{item}</MenuItem>)}
            </MenuBar>
            <NavBar>
                <IconButton $width={18} aria-label="Назад">
                    <svg width="12" height="12" viewBox="0 0 12 12"><circle cx="6" cy="6" r="5.500" fill="#2c3f60" stroke="#8293ac" /><path d="M9.500 6H3m2.700-2.800L3 6l2.700 2.800" fill="none" stroke="#fff" strokeWidth="1.500" /></svg>
                    <Arrow />
                </IconButton>
                <IconButton $width={20} aria-label="Вперёд">
                    <svg width="12" height="12" viewBox="0 0 12 12"><circle cx="6" cy="6" r="5.500" fill="#b4bfd2" stroke="#8d9ab0" /><path d="M2.500 6H9M6.300 3.200 9 6 6.300 8.800" fill="none" stroke="#eef3fb" strokeWidth="1.500" /></svg>
                    <Arrow color="#8793a8" />
                </IconButton>
            </NavBar>
            <Body>
                <SystemTree />
                <Main>
                    <TabStrip>
                        <PageTab>little <span>×</span></PageTab>
                        <PaneButton aria-label="Список вкладок"><Arrow /></PaneButton>
                    </TabStrip>
                    <PageToolbar>
                        <IconButton aria-label="Обзор"><Icon name="goggles" size={12} /></IconButton>
                        <IconButton $active aria-label="Указатель"><Icon name="cursor" size={12} /></IconButton>
                        <IconButton aria-label="Рука"><Icon name="hand" size={11} /></IconButton>
                        <IconButton aria-label="Увеличить"><Icon name="zoomIn" size={11} /></IconButton>
                        <IconButton aria-label="Уменьшить"><Icon name="zoomOut" size={11} /></IconButton>
                        <Divider />
                        <IconButton aria-label="Печать"><Icon name="print" size={12} /></IconButton>
                        <IconButton aria-label="Настройка печати"><Icon name="printSetup" size={12} /></IconButton>
                        <IconButton aria-label="Просмотр"><Icon name="preview" size={12} /></IconButton>
                    </PageToolbar>
                    <Graphics />
                    <Alarms />
                </Main>
            </Body>
        </Window>
    )
}
